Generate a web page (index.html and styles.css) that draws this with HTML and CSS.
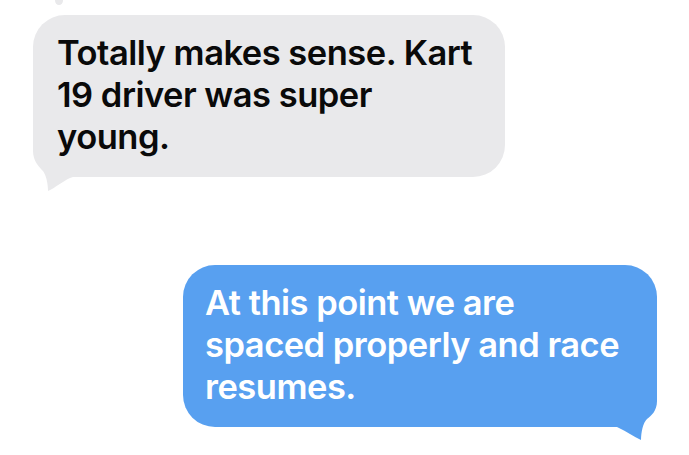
FILE: index.html
```html
<!DOCTYPE html>
<html lang="en">
<head>
    <meta charset="UTF-8">
    <meta name="viewport" content="width=device-width, initial-scale=1.0">
    <title>Messages</title>
    <link rel="stylesheet" href="styles.css">
</head>
<body>
    <div class="thread">
        <!-- tail of the previous incoming message, cut off at the top -->
        <div class="prev-tail"></div>

        <!-- Incoming message (left) -->
        <div class="bubble incoming">
            Totally makes sense. Kart 19 driver was super young.
            <svg class="tail tail-left" width="40" height="47" viewBox="0 0 40 47">
                <path d="M0 0 L0 6 C0 16 6 22 10 26 C13 30 15 38 15 46 C22 43 30 36 37 33 L40 32 L40 0 Z" fill="#e9e9eb"/>
            </svg>
        </div>

        <!-- Outgoing message (right) -->
        <div class="bubble outgoing">
            At this point we are spaced properly and race resumes.
            <svg class="tail tail-right" width="40" height="46" viewBox="0 0 40 46">
                <path d="M40 0 L40 6 C40 16 34 21 30 24 C26 28 24 37 24 45 C17 42 9 36 2 33 L0 32 L0 0 Z" fill="#58a0f0"/>
            </svg>
        </div>
    </div>
</body>
</html>
```

FILE: styles.css
```css
body {
    margin: 0;
    padding: 0;
    background-color: #ffffff;
    font-family: Inter, "Noto Sans", "Liberation Sans", sans-serif;
}
.thread {
    display: flex;
    flex-direction: column;
    padding: 15px 32px 28px 33px;
    position: relative;
}
.prev-tail {
    position: absolute;
    top: -4px;
    left: 55px;
    width: 8px;
    height: 9px;
    border-radius: 50%;
    background-color: #e9e9eb;
}
.bubble {
    position: relative;
    z-index: 0;
    box-sizing: border-box;
    height: 162px;
    font-size: 34.5px;
    font-weight: 600;
    line-height: 42px;
    letter-spacing: -0.5px;
    border-radius: 32px;
    padding: 17px 24px 0 24px;
}
/* Incoming bubble (left) */
.incoming {
    width: 472px;
    background-color: #e9e9eb;
    color: #0a0a0a;
}
/* Outgoing bubble (right) */
.outgoing {
    width: 474px;
    align-self: flex-end;
    margin-top: 88px;
    padding-left: 22px;
    background-color: #58a0f0;
    color: #ffffff;
}
/* tails sit under the text */
.tail {
    position: absolute;
    z-index: -1;
}
.tail-left {
    left: 0;
    bottom: -15px;
}
.tail-right {
    right: 0;
    bottom: -14px;
}
```
